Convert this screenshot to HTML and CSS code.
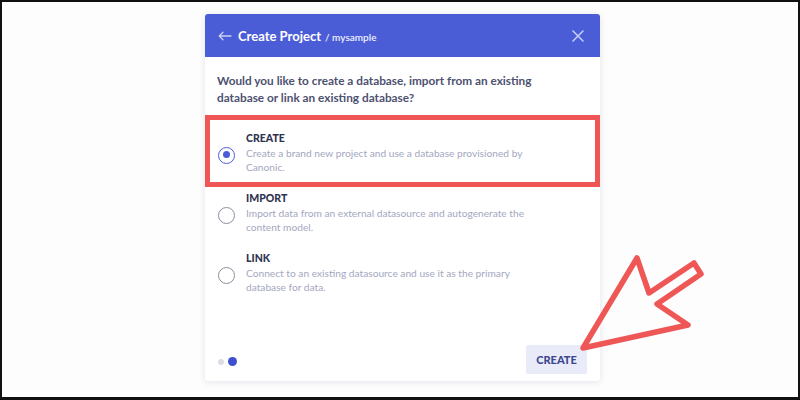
FILE: index.html
```html
<!DOCTYPE html>
<html>
<head>
<meta charset="utf-8">
<link rel="stylesheet" href="styles.css">
</head>
<body>
<div class="frame">
  <div class="card">
    <div class="card-head">
      <svg class="back" width="14" height="10" viewBox="0 0 14 10"><path d="M13 5H1.5M5 1.2L1.2 5 5 8.8" fill="none" stroke="#c9cff5" stroke-width="1.3" stroke-linecap="round" stroke-linejoin="round"/></svg>
      <span class="title">Create Project</span>
      <span class="crumb">/ mysample</span>
      <svg class="close" width="12" height="12" viewBox="0 0 12 12"><path d="M1 1L11 11M11 1L1 11" stroke="#c9cff5" stroke-width="1.5" stroke-linecap="round"/></svg>
    </div>
    <div class="card-body">
      <p class="question">Would you like to create a database, import from an existing database or link an existing database?</p>
      <div class="option selected">
        <span class="radio checked"></span>
        <div class="opt-text">
          <div class="opt-title">CREATE</div>
          <div class="opt-desc">Create a brand new project and use a database provisioned by Canonic.</div>
        </div>
      </div>
      <div class="option">
        <span class="radio"></span>
        <div class="opt-text">
          <div class="opt-title">IMPORT</div>
          <div class="opt-desc">Import data from an external datasource and autogenerate the content model.</div>
        </div>
      </div>
      <div class="option">
        <span class="radio"></span>
        <div class="opt-text">
          <div class="opt-title">LINK</div>
          <div class="opt-desc">Connect to an existing datasource and use it as the primary database for data.</div>
        </div>
      </div>
    </div>
    <div class="card-foot">
      <div class="dots"><span class="dot"></span><span class="dot active"></span></div>
      <button class="btn">CREATE</button>
    </div>
  </div>
  <svg class="pointer" width="800" height="400" viewBox="0 0 800 400">
    <path d="M583 348 L637 258 L649 293 L694 263 L701 274 L657 304 L688 325 Z" fill="none" stroke="#ef5656" stroke-width="5.5" stroke-linejoin="round"/>
  </svg>
</div>
</body>
</html>
```
FILE: styles.css
```css
* { box-sizing: border-box; }
html, body { margin: 0; padding: 0; }
body { width: 800px; height: 400px; overflow: hidden; font-family: Lato, "Noto Sans", sans-serif; }
.frame {
  position: relative;
  width: 800px; height: 400px;
  border-style: solid;
  border-color: #111;
  border-width: 2px 2px 3px 2px;
  background: #fdfdfe;
  padding: 12px 0 0 203px;
}
.card {
  width: 395px;
  height: 367px;
  background: #fff;
  border-radius: 3px;
  box-shadow: 0 1px 6px rgba(40, 45, 80, 0.12);
  display: flex;
  flex-direction: column;
}
.card-head {
  flex: none;
  height: 43px;
  background: #4b5dd6;
  border-radius: 3px 3px 0 0;
  display: flex;
  align-items: center;
  padding: 0 16px 0 13px;
  color: #fff;
}
.back { margin-right: 6px; }
.title { font-size: 13px; font-weight: 700; }
.crumb { font-size: 10px; font-weight: 600; margin-left: 4px; margin-top: 2px; color: #eef0ff; }
.close { margin-left: auto; }
.card-body { flex: 1; }
.question {
  margin: 15px 24px 9px 12px;
  font-size: 11.8px;
  line-height: 17px;
  font-weight: 700;
  color: #4d5170;
}
.option {
  display: flex;
  align-items: flex-start;
  padding: 4.5px 20px 0 13px;
  height: 60px;
}
.option.selected {
  border: 5px solid #ef5656;
  padding: 11.5px 15px 0 8px;
  height: 72px;
}
.radio {
  flex: none;
  width: 17px; height: 17px;
  border: 1.5px solid #8b8e9c;
  border-radius: 50%;
  margin-top: 15px;
  position: relative;
}
.radio.checked { border-color: #4b5dd6; }
.radio.checked::after {
  content: "";
  position: absolute;
  left: 3.5px; top: 3.5px;
  width: 7px; height: 7px;
  border-radius: 50%;
  background: #4b5dd6;
}
.opt-text { margin-left: 11px; }
.opt-title { font-size: 10.5px; font-weight: 900; color: #2f3350; line-height: 13px; }
.opt-desc { font-size: 10.2px; color: #a4a7bf; line-height: 14px; margin-top: 1px; width: 290px; }
.card-foot {
  flex: none;
  display: flex;
  align-items: flex-end;
  justify-content: space-between;
  padding: 0 13px 7px 13px;
}
.dots { display: flex; align-items: center; gap: 4px; margin-bottom: 8px; }
.dot { width: 6px; height: 6px; border-radius: 50%; background: #dcdde3; }
.dot.active { width: 9px; height: 9px; background: #3e50d0; }
.btn {
  border: 0;
  background: #e9ecf8;
  color: #3b4790;
  font-family: Lato, "Noto Sans", sans-serif;
  font-weight: 900;
  font-size: 11px;
  width: 61px; height: 29px;
  padding: 0;
  border-radius: 2px;
}
.pointer { position: absolute; left: -2px; top: -2px; pointer-events: none; }
```
